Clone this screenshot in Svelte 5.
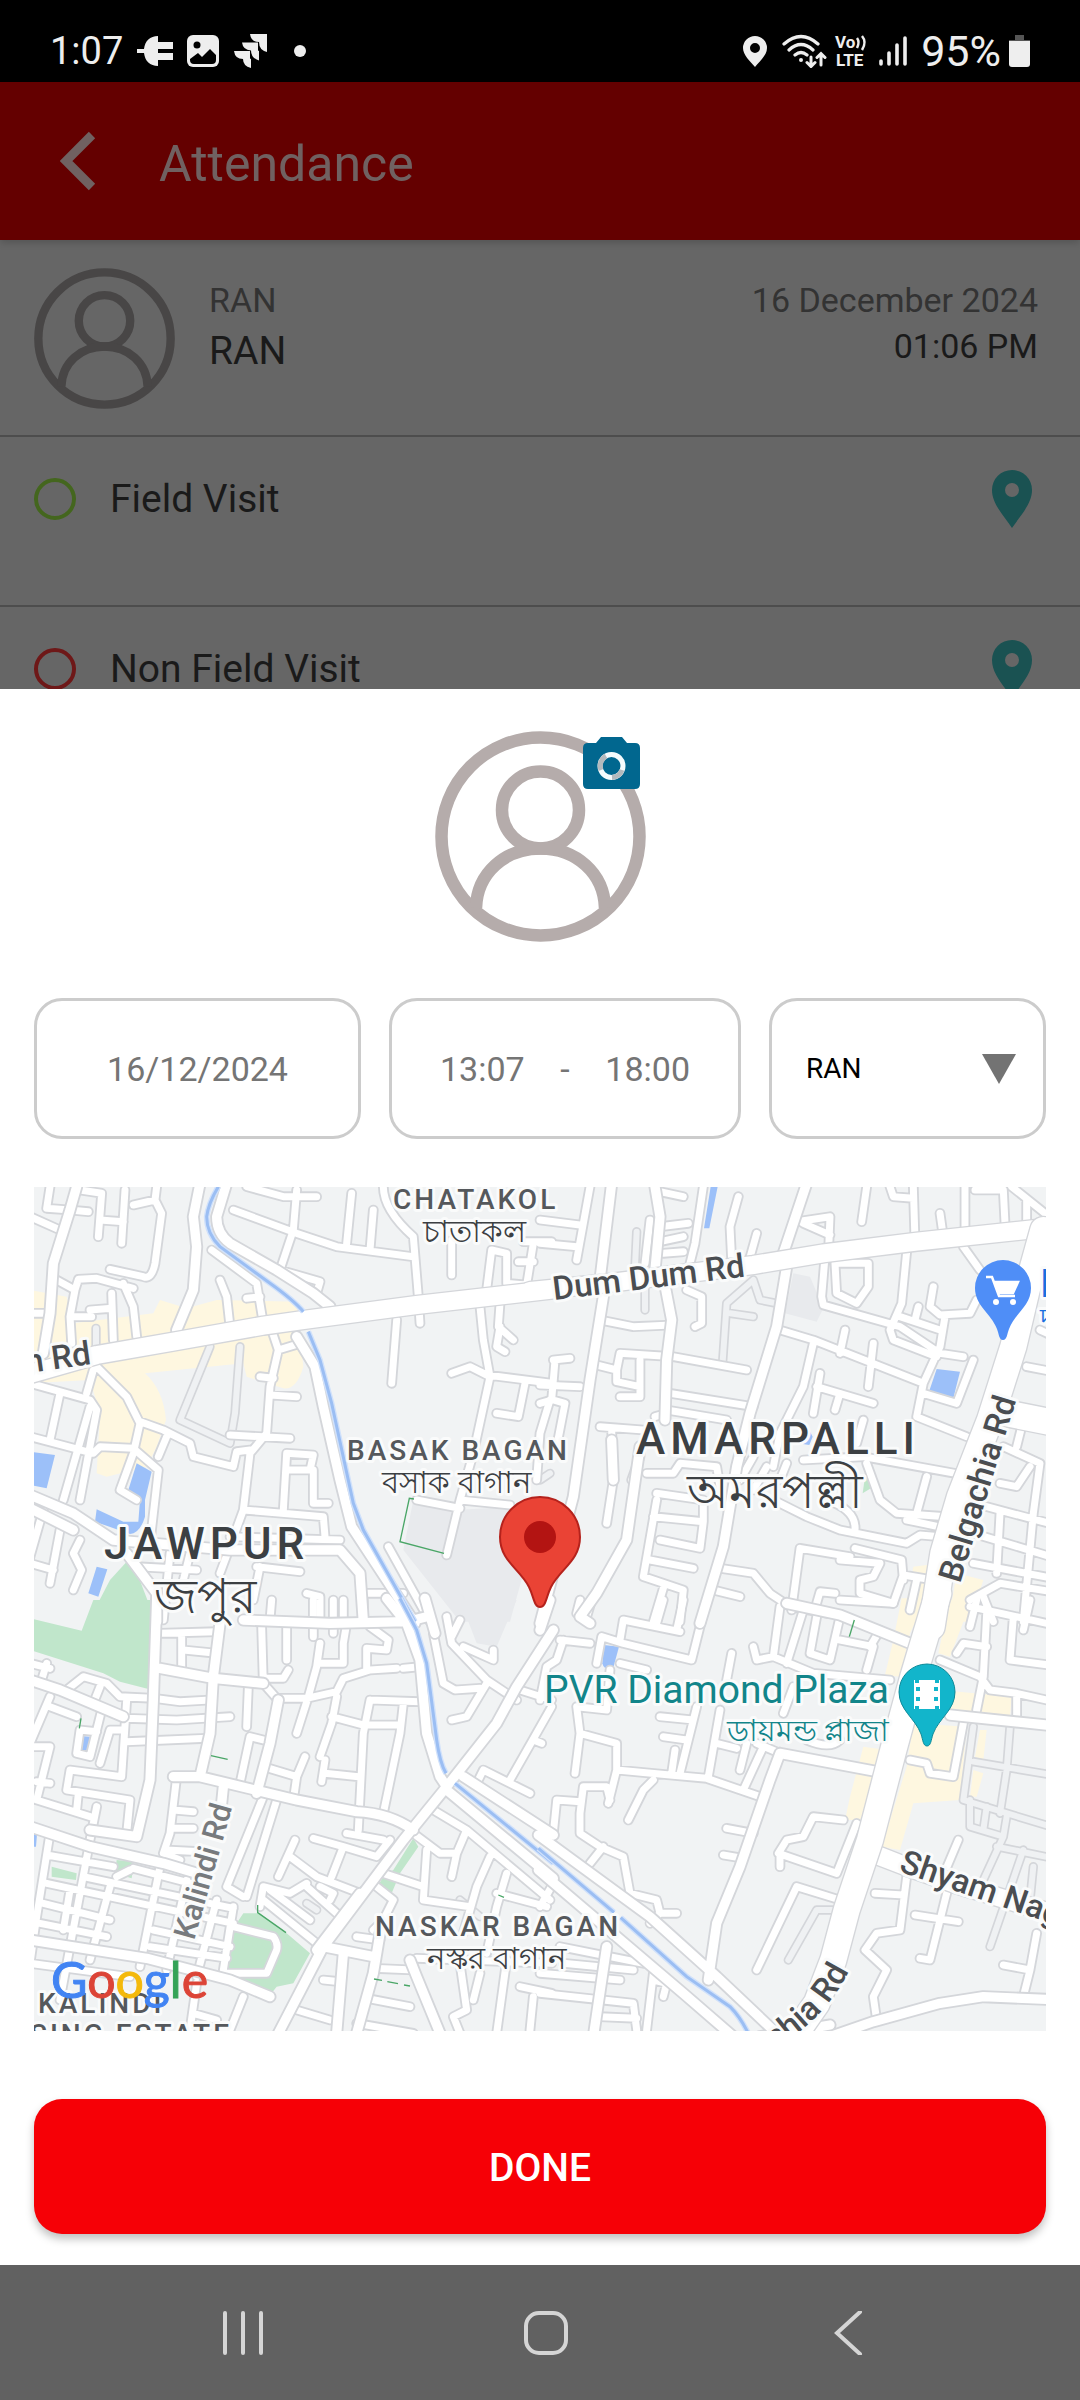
<script>
	let date = '16/12/2024'
	let from = '13:07'
	let to = '18:00'
	let place = 'RAN'

	const visits = [
		{ name: 'Field Visit', kind: 'green' },
		{ name: 'Non Field Visit', kind: 'red' }
	]

	// the map is four tiles, each drawn in its own units (3 units = 1 map pixel)
	const tiles = [
		{
			x: -4, y: -7,
			yellow: 'M0 330L110 350 130 430 370 400 390 360 470 385 560 360 800 365 820 560Q800 630 760 625L650 590 640 550 345 580Q400 630 408 720L380 800 350 860 230 890 200 880 210 700 180 600 0 610Z',
			blue: 'M0 815L75 825 50 925 0 915ZM320 850L365 875 345 960 345 1010Q330 1060 300 1062L195 1025 200 988 280 1025 325 1025 330 960 295 930ZM200 1160L232 1168 205 1250 175 1240Z',
			green: 'M290 1145L310 1150 360 1280 362 1325 175 1325 240 1200Z',
			grey: 'M1150 960L1280 990 1440 980 1480 1180 1440 1325 1290 1325 1120 1110Z',
			lines: 'M1152 957L1138 955 1110 1085 1242 1120',
			canal: 'M565 20Q535 70 530 110Q530 160 570 200L720 310Q790 360 820 395M835 455L870 540 905 670 970 970 1000 1050 1155 1325',
			lane: 'M540 500L450 720 600 790 615 700 630 500M198 445V500',
			minor: 'M0 110L90 150M60 20L50 85 120 90 175 95M150 30L215 40 205 170M210 120L280 125M285 30L275 190M380 20L375 60 310 75M375 60L395 100 375 250Q365 300 340 290L240 268M80 300L135 330 145 298 200 295 310 325M280 310L310 380 320 470M135 330L120 410 125 490M125 410H185M245 340L250 480M180 390L245 385M0 400H50M545 210L680 310 700 430M650 355L690 350M570 300L590 350 600 440M610 90L800 160 920 200 1150 230M800 30L790 150 750 270M650 20L760 50 860 50M965 40L950 190M1030 90L1020 210M1060 20Q1060 90 1150 170L1165 350 1170 430M750 270L870 305 860 340M1265 180V285M1370 330L1385 210 1430 220 1430 310 1490 315 1510 190M1465 245H1510M1480 185H1565M1100 420L1085 610M1350 380L1360 480 1380 590 1330 820 1290 960 1250 1125M1410 370L1405 440 1450 480M1410 440L1400 500 1425 515M1265 580L1320 560 1370 585 1565 610M1485 610L1465 710 1400 700M1560 660L1530 760 1520 900M1160 960L1290 985M1290 960L1440 975M725 450L745 510 720 620 710 760 660 820 640 990 600 1100 570 1180M745 510L810 490M690 590L730 595M720 645L800 650M600 765L780 775M200 560L290 650 330 730 310 820 270 930 320 960M330 725L400 750 480 790 490 830 610 860 620 815 660 810M410 770L385 830M0 610L180 660 200 690 150 960M190 570L170 640M180 680L100 960M90 640L60 780M0 770L190 820 210 800 310 805 385 870 360 1090M40 990L0 1130M60 1210L90 1050M150 1080L130 1120 155 1170 130 1230M640 990L880 1010 885 1070M770 820L850 825 840 870 770 870M770 820L760 990M850 870V970H895M600 1070L930 1080M680 1160L810 1175M690 1160L670 1260M320 1160L500 1170M420 1120L400 1320M480 1120L460 1200M1075 1100L1200 1325M1010 1240H1120M830 1240L870 1250 870 1325M940 1260V1325M0 1150L70 1170',
			road: 'M510 10L490 110 500 200 490 330 440 450M590 10L560 110Q560 160 600 190L740 270 850 340 900 380M140 20L120 90 70 250 60 400 40 520M800 470L855 560 880 680 930 900 965 1040 1070 1200 1155 1330M0 945L130 1000 250 1080 600 1110 930 1110 990 1180 1000 1325M290 1120L380 1240 380 1325M0 985L130 1050',
			main: 'M-10 585L200 525 430 485 700 437 820 420 1160 375 1600 325'
		},
		{
			x: 506, y: -7,
			yellow: 'M1120 1160L1200 1150 1180 1325 1085 1325 1110 1220ZM1250 1180L1330 1200 1290 1325 1225 1325Z',
			blue: 'M1190 567L1260 575 1240 655 1168 632ZM800 735L818 770 808 795 788 792ZM512 20H533L508 145H492Z',
			green: 'M975 890L1000 920 968 940Z',
			grey: 'M760 280L810 290 850 385 830 425 735 400Z',
			lines: '',
			canal: '',
			lane: 'M548 545L560 370 640 300M570 400L640 410M640 300L660 360 710 370M315 300V390M0 900L30 880M290 155L285 260',
			minor: 'M360 35L430 50M360 140L445 130M360 185L430 170M370 220L430 215M330 120L315 250M0 120L120 135M0 190L110 200M150 20L110 240M490 20L465 190 450 250M595 50L570 140 575 240M650 160L625 250M440 330L485 350 485 430 465 440M770 125L870 110 865 230M790 130L870 165M980 20L965 125M1050 20L1060 50 1120 55M1120 20L1125 180M1200 100L1210 170M1275 20V160M1305 30H1390L1395 130M1460 60V130M1415 20L1515 100M855 230L845 350 850 375 1080 440 1200 520 1270 530M885 250L890 340 950 370 985 320 985 250ZM1100 215L1085 370 1050 450 1060 480 1190 530M1270 200L1320 270M1180 320L1170 380 1200 405 1290 400 1310 360M1135 380L1125 420M1080 410L1200 450M1215 410L1200 500 1150 610 1130 710 1280 770M720 450L820 480 1150 610M915 450L900 520M1000 490L985 620M820 490L790 620 720 760 700 860M840 580L820 700M830 620L1000 670M900 640L885 690M1150 640L1250 670 1300 540M180 420L280 440 395 435M170 555L230 570 240 520 400 530 620 570M300 540V650H240M230 570V605L300 620M390 640L640 680M380 690L560 720M345 710L380 700M0 615L120 620M40 540L90 535M45 540L35 660 0 670M40 660L75 670 50 800M180 740L310 750M215 750L220 900 200 1030M300 830L275 900M320 880H400L420 850 530 860 540 920M350 940L490 960M350 960L310 1190 430 1230 420 1325M340 1010L490 1025 480 1105 360 1080M490 960V1025M330 1140L460 1165M370 1225L340 1325M790 840L970 830 1300 890M640 830L600 900M680 860L640 930M740 850L720 900M980 850L1020 960 1070 1000 1220 1010M1100 1020L1220 1045M1160 890L1130 1000M700 960L800 1010 900 1050 1100 1090 1140 1065 1200 1070M860 960Q950 990 945 1050M540 1165L640 1180 690 1240 750 1280 860 1300M520 1230L600 1250M755 1290L780 1105 930 1130M945 1105L1085 1140 1090 1200M900 1140L1020 1150 1000 1190 960 1200 960 1240 1060 1270 1090 1185 1180 1200M830 1270L840 1235 885 1240M1130 1200L1110 1290M970 720L950 790M1460 560L1565 580M1390 800L1500 850 1480 1000 1450 1325M1340 980L1565 1040M1300 1060L1400 1090 1565 1140M1300 1150L1565 1200M1380 1000L1370 1180M1470 860L1430 920 1380 910M1450 720L1430 800M1290 1260L1380 1210 1565 1240M1330 1250L1360 1325M1500 450L1565 480',
			road: 'M215 10L180 300M190 350L150 600 100 950 0 1330M800 10L730 220M740 260L710 440 630 700 590 860 550 1100 480 1330M345 20L360 110 345 270M370 290L395 420 380 540 375 720M300 800L260 1080 170 1240 120 1310 150 1330M215 780L220 900',
			main: 'M-30 333L200 310 640 255 850 220 1130 185 1600 135',
			wide: 'M1510 150L1460 330 1420 500 1350 720 1260 950 1210 1120 1175 1340M1400 700L1600 740'
		},
		{
			x: -4, y: 413,
			yellow: '',
			blue: 'M150 408L180 410 170 455 147 450ZM0 690H22L18 740H0Z',
			green: 'M0 55L155 92 190 0H362L358 268 270 245 220 220 0 150ZM640 940H690L770 1000 840 1060 790 1150 740 1160 720 1185 580 1150 600 1000ZM1150 715L1165 740 1110 820 1085 880 1045 855 1060 830 1090 810ZM260 780L312 785 305 835 255 820ZM65 800L140 820 138 840 65 830Z',
			grey: 'M1290 0H1460L1400 140 1340 130Z',
			lines: 'M153 355L148 385M543 467L593 478M683 915V938L768 998M1032 1137L1056 1141M1072 1145L1104 1151M1122 1155L1140 1158M1405 885L1422 892',
			canal: 'M1110 -5L1160 90 1190 190 1220 420Q1230 490 1248 520M1275 550L1570 790',
			lane: 'M1290 900L1350 950M830 910L860 930',
			minor: 'M390 100L560 95M455 110V210M460 150L560 160M695 80L700 250M770 80V180M775 210L760 235H710M725 0L720 60M850 80V110M910 0V100M850 0V60M1000 0V60M950 70L940 130M870 130L860 200 835 290 800 400M870 190H940V130M1020 80L1075 120 1070 150 1010 145V210M700 250L740 295H830L920 275 940 235 1020 210 1100 205M1120 205L1170 200M920 290L905 370 870 470M905 350L1000 375H1110M1020 300L1170 305M1120 310L1110 400 1060 640M1020 300L1000 400 985 690M370 295L450 305 540 300M290 355L440 360 600 350M290 425L530 415M655 260L650 380M720 425L660 410 630 550M700 500L800 530 790 600M825 470L800 530M885 480L875 545M885 520L985 530M440 530L420 700 400 760 450 780M430 630L490 635M430 685H490M410 750L510 755M740 600L650 890M700 590L590 860 640 890M50 190L35 240M0 190L60 205M110 270L160 230 230 250 270 290 370 295M210 260L190 310M60 290L0 430M60 320L140 350M215 330L180 470 140 460 150 390 200 395M210 490L240 390 280 390M290 300L275 530 120 510 110 570 300 600 290 700M0 440L60 440 20 600 180 650M20 545L60 550M200 620L180 720 90 1200M145 580L140 630M50 765L250 800M310 805L520 860M160 830L610 925M50 850L610 970M40 910L240 960M30 970L230 1010M370 990L600 1040M360 1040L590 1075M60 700L20 950 0 1090M240 860L180 1080M390 800L330 1100M470 840L410 1110M560 900L500 1130M610 920L580 1110M0 1090L300 1130M120 870L100 990M300 810L260 830M610 980L730 1010Q745 1030 740 1050L710 1120 590 1120M690 920L700 860 780 880 830 850M795 720L745 830M780 770L860 830 990 880M850 715L940 740 1040 770 1080 720M940 740L905 830M950 700L1060 720M700 900L860 1030M720 870L840 960M830 860L920 940M870 860L910 880 900 900M1210 630L1310 690 1560 900M1150 700L1230 760 1280 760 1265 830M1310 690L1280 760M1060 820L1180 860M1190 750L1180 900 1320 920M1380 770L1340 860 1300 1000M1430 820L1400 920 1370 1060M1400 880L1550 920M1040 860L1090 900 1060 960 1030 990M1470 270L1565 300M1510 420L1535 430M1565 320L1440 540M1340 550L1360 510 1500 580M1300 140L1390 180V150M1250 50L1265 130 1370 240 1460 300M1290 60L1265 110M1370 250L1310 350 1265 360M1210 100L1240 250 1275 270 1350 265M880 1140L930 1145M1010 1195L1140 1220M800 1230L900 1260M980 1270L1150 1300M980 1010L1050 1020M1290 1090L1310 1230 1270 1250 1290 1300M1430 1080L1400 1300M1470 1160L1565 1180M1510 1190L1500 1290M1160 1075L1565 1090M1030 1105L1150 1110M640 1190L600 1290M500 1150L480 1290M490 1240L560 1260M1350 1120L1330 1200',
			road: 'M1070 -5L1130 70 1170 180 1190 400 1230 530 1250 560M1185 -5L1215 100M1570 90L1460 260 1400 370 1250 560 1120 720 880 1040 740 1310M1250 570L1570 835M1300 530L1570 705M640 60L900 70 1130 65 1190 50M570 70L550 230 540 400 510 530M380 0L370 300 360 540 320 710 180 690M390 205L550 235 700 250M745 300L720 430 680 580M430 530H510L800 600 980 635Q1080 640 1150 690M580 560L570 660M0 240L90 270 280 350M0 680L180 740 400 790 500 820M0 1020L350 1075 600 1140 720 1190M990 880L860 1050M880 1040L1030 1070M1050 1000L1030 1120 980 1300M940 1060L920 1300M1140 1080L1160 1130 1230 1300'
		},
		{
			x: 506, y: 413,
			yellow: 'M1085 -5H1160L1110 100 1080 230 1035 225 1060 120ZM1230 -5L1280 40 1230 170 1195 160ZM970 440L1040 450 960 660 915 660 930 590ZM1120 370L1280 380 1260 600 1120 610 1080 750 1025 740 1100 500ZM1200 270L1415 290 1410 350 1200 340ZM1320 390H1340L1330 480 1305 470ZM1300 510L1330 520 1310 590 1290 590ZM1470 780L1480 840 1465 830Z',
			blue: 'M192 135L237 140 218 210Q190 210 187 190Z',
			green: '',
			grey: '',
			lines: 'M943 60L928 110',
			canal: 'M-5 745L222 937M242 953L440 1130 570 1220Q600 1250 625 1300',
			lane: 'M745 1080L830 930 880 930M1300 380L1270 600 1565 690M1300 485L1565 530M1410 380L1400 510 1380 640M1290 600V680L1390 710 1330 840M1370 740L1565 780M1450 750L1350 1040M1340 620L1330 690M1400 650L1390 710M1480 800L1470 900',
			minor: 'M500 0L455 180 250 130 185 110 170 190M60 120L150 130M70 120L50 180 20 200 0 300M155 0L140 50 110 40 120 0M240 120L250 60 420 95M370 0L350 70M430 0L410 90M240 190L320 210M210 210L200 330M110 320L120 400 230 430 230 510 205 610M110 320L200 330M120 400L105 520M230 510L390 525 500 535 660 590M360 350L460 360M470 320L420 520M370 410L440 420M405 450L395 520M540 330L505 530M670 440L610 570M530 430L590 445M600 510L620 430M650 430L720 460M800 420Q870 450 900 420M560 685L640 700M550 765L610 775M210 600L200 560 130 560 120 640 120 700 180 740 250 770 270 880 350 900 360 940 410 940M40 700L50 600 120 605M150 790L190 740M360 940L330 970M265 660L310 570 340 540M720 20L700 170 650 180 640 140M790 30L740 190M830 50L810 160 870 180 900 50M700 170L820 220 1050 240M900 120L1000 140 980 210M1020 90L990 140M575 160L560 240M760 260L730 340M910 660L820 650 790 710 740 720 715 760 890 820 950 670M720 760V800M650 1110L770 860 900 900M1200 180L1320 230 1350 270 1430 280 1565 310M1310 0L1290 80M1250 160L1270 130 1340 140M1340 40L1330 230 1310 330M1420 50L1410 180 1565 200M1470 0L1450 90M1430 290V350M1110 480L1160 490 1170 520 1240 530 1270 370M1255 720L1200 850M1220 880L1170 1080 1140 1075M1125 945L1255 965M1100 830L1080 990 1010 1000 975 1050 1040 1110 1000 1190 1010 1260M1005 880L1090 885M1390 1095L1470 1110 1450 1190M1490 1000L1470 1110M60 1040L310 1090M70 1090L280 1110M0 1120L240 1140M0 1180L280 1210 290 1290M340 1120L320 1290M340 1140L380 1150 370 1190M180 1250L290 1255M40 850L0 920M900 0L1060 10M1290 20L1565 80',
			road: 'M-5 705L330 950 530 1130 720 1310M-5 810L430 1180 580 1310M740 10L900 45 1110 130M720 460L1040 520M720 460L690 540 600 800 530 970 505 1140M200 1040L160 1310M870 1310L1000 1265 1200 1210 1330 1190 1565 1200M1230 345L1565 380M30 0L0 90M660 1310L870 1275',
			main: 'M1010 765L1100 800 1240 850 1600 960',
			wide: 'M1195 -20L1120 230 1060 450 990 720 920 930 880 1080 830 1210 760 1310'
		}
	]
	const widths = { lane: [28, 18], minor: [32, 21], road: [39, 28], main: [62, 54], wide: [86, 78] }
	const kinds = ['lane', 'minor', 'road', 'main', 'wide']
</script>

{#snippet avatar()}
	<svg class="avatar" viewBox="0 0 211 211" aria-hidden="true">
		<g fill="none" stroke="currentColor" stroke-width="12.5">
			<circle cx="105.5" cy="105.5" r="99" />
			<circle cx="105.5" cy="79" r="38.5" />
			<path d="M41 177C42 142 70 117.500 105.500 117.500S169 142 170 177" />
		</g>
	</svg>
{/snippet}

<main class="screen">
	<header class="status">
		<div class="side">
			<span class="clock">1:07</span>
			<svg class="plug" width="36" height="32" viewBox="0 0 36 32"><path d="M0 14H7C8 6 13 1 21 1V7H36V14H21V18H36V25H21V31C13 31 8 26 7 18H0Z" fill="#eee" /></svg>
			<svg class="photo" width="32" height="32" viewBox="0 0 32 32"><rect width="32" height="32" rx="6" fill="#eee" /><circle cx="10" cy="10" r="3.500" /><path d="M3 24L11 18 15 22 23 14 29 20V25Q29 29 25 29H7Q3 29 3 25Z" /></svg>
			<svg class="jira" width="34" height="34" viewBox="0 0 34 34" fill="#eee"><path d="M16 0H33V18Q25 16 25 8Q17 8 16 0Z" /><path d="M8 8.500H24V16Q24 17 25 17V26.500Q17 24 17 16.500Q9 16 8 8.500Z" /><path d="M0 17H16V24Q16 25 17 25V34Q9 32 9 25Q1 25 0 17Z" /></svg>
			<span class="dot"></span>
		</div>
		<div class="side">
			<svg width="24" height="31" viewBox="0 0 24 31"><path d="M12 0A12 12 0 0 0 0 12C0 19 7 25 12 31C17 25 24 19 24 12A12 12 0 0 0 12 0ZM12 7A5 5 0 1 1 12 17A5 5 0 1 1 12 7Z" fill="#eee" fill-rule="evenodd" /></svg>
			<svg class="wifi" width="45" height="34" viewBox="0 0 45 34" fill="none" stroke="#eee" stroke-width="3.200" stroke-linecap="round"><path d="M2 10Q19-5 36 10M7 16Q19 5 31 16M13 21Q19 16 25 21" /><circle cx="19" cy="26" r="1" fill="#eee" stroke-width="2" /><path d="M29 23V32M25 28.500L29 32.500 33 28.500M39 31V20M35 23.500L39 19.500 43 23.500" stroke-width="3" /></svg>
			<svg class="volte" width="32" height="34" viewBox="0 0 32 34"><text x="0" y="14">Vo</text><text x="1" y="32">LTE</text><path d="M22 4Q25 8 22 14M27 2Q32 8 27 16" fill="none" stroke="#eee" stroke-width="2.500" /></svg>
			<svg class="bars" width="28" height="31" viewBox="0 0 28 31" stroke="#eee" stroke-width="3.600" stroke-linecap="round"><path d="M2 25V28M10 17V28M18 9V28M26 2V28" /></svg>
			<span class="clock level">95%</span>
			<svg class="battery" width="21" height="32" viewBox="0 0 21 32"><path d="M6 0H15V5H21V9H0V5H6Z" fill="#555" /><path d="M0 6H21V29Q21 32 18 32H3Q0 32 0 29Z" fill="#eee" /></svg>
		</div>
	</header>

	<section class="behind">
		<div class="toolbar">
			<button class="back" aria-label="Back">
				<svg width="36" height="60" viewBox="0 0 36 60"><path d="M32 4L6 30 32 56" fill="none" stroke="currentColor" stroke-width="9" /></svg>
			</button>
			<h1>Attendance</h1>
		</div>
		<div class="user">
			{@render avatar()}
			<div class="who">
				<span class="small">RAN</span>
				<span class="big">RAN</span>
			</div>
			<div class="when">
				<span class="small">16 December 2024</span>
				<span class="time">01:06 PM</span>
			</div>
		</div>
		{#each visits as visit}
			<div class="visit">
				<span class="ring {visit.kind}"></span>
				<span class="label">{visit.name}</span>
				<svg width="40" height="58" viewBox="0 0 40 58"><path d="M20 0A20 20 0 0 0 0 20C0 34 12 46 20 58C28 46 40 34 40 20A20 20 0 0 0 20 0ZM20 13A7 7 0 1 1 20 27A7 7 0 1 1 20 13Z" fill="#1a5252" fill-rule="evenodd" /></svg>
			</div>
		{/each}
	</section>

	<section class="sheet">
		<div class="photo-box">
			{@render avatar()}
			<button class="camera" aria-label="Take photo">
				<svg width="57" height="52" viewBox="0 0 57 52"><path d="M5 6H13L18 0H39L44 6H52Q57 6 57 11V47Q57 52 52 52H5Q0 52 0 47V11Q0 6 5 6Z" fill="#01678f" /><circle cx="28.500" cy="29" r="11.500" fill="none" stroke="#f4fbfd" stroke-width="5" /><path d="M18 33A11.500 11.500 0 0 1 23 19M39 33A11.500 11.500 0 0 1 29 40.500" fill="none" stroke="#b3b9bd" stroke-width="5" /></svg>
			</button>
		</div>

		<div class="fields">
			<input class="box" type="text" aria-label="Date" bind:value={date} />
			<div class="box times">
				<input type="text" aria-label="From" bind:value={from} />
				<span>-</span>
				<input type="text" aria-label="To" bind:value={to} />
			</div>
			<div class="box pick">
				<select aria-label="Place" bind:value={place}>
					<option>RAN</option>
				</select>
				<svg width="34" height="30" viewBox="0 0 34 30" aria-hidden="true"><path d="M0 0H34L17 30Z" fill="#737373" /></svg>
			</div>
		</div>

		<svg class="map" viewBox="0 0 1012 844" role="img" aria-label="Map">
			<rect width="1012" height="844" fill="#f1f3f4" />
			{#each tiles as t}
				<g transform="translate({t.x} {t.y}) scale(.33333)">
					<path d={t.grey} fill="#e8eaed" />
					<path d={t.yellow} fill="#fef7e0" />
					<path d={t.green} fill="#c0e6cb" />
					<path d={t.blue} fill="#9cc0f9" />
				</g>
			{/each}
			{#each kinds as kind, k}
				{#each [0, 1] as layer}
					{#each tiles as t}
						{#if t[kind]}
							<path
								d={t[kind]}
								transform="translate({t.x} {t.y}) scale(.33333)"
								class="way"
								stroke={layer == 0 ? '#d4d6da' : k == 0 ? '#eff1f3' : '#fff'}
								stroke-width={widths[kind][layer]}
							/>
						{/if}
					{/each}
				{/each}
			{/each}
			{#each tiles as t}
				<g transform="translate({t.x} {t.y}) scale(.33333)" fill="none">
					<path d={t.canal} stroke="#d0e1fb" stroke-width="17" />
					<path d={t.canal} stroke="#9bbef3" stroke-width="9" />
					<path d={t.lines} stroke="#4aa667" stroke-width="4" />
				</g>
			{/each}

			<g class="names">
				<g class="place">
					<text x="359" y="22">CHATAKOL</text>
					<text x="313" y="273">BASAK BAGAN</text>
					<text x="341" y="749">NASKAR BAGAN</text>
					<text x="4" y="826">KALINDI</text>
					<text x="198" y="857" text-anchor="end">HOUSING ESTATE</text>
				</g>
				<g class="town">
					<text x="602" y="267">AMARPALLI</text>
					<text x="70" y="372">JAWPUR</text>
				</g>
				<g class="bn">
					<text x="440" y="55">চাতাকল</text>
					<text x="423" y="306">বসাক বাগান</text>
					<text x="463" y="782">নস্কর বাগান</text>
				</g>
				<g class="bn large">
					<text x="741" y="321">অমরপল্লী</text>
					<text x="171" y="426">জপুর</text>
				</g>
				<g class="street">
					<text transform="translate(520 113) rotate(-7)">Dum Dum Rd</text>
					<text transform="translate(58 177) rotate(-8)" text-anchor="end">n Rd</text>
					<text transform="translate(926 397) rotate(-73)">Belgachia Rd</text>
					<text transform="translate(864 684) rotate(19)">Shyam Nagar Rd</text>
					<path id="bend" d="M702 884Q785 845 815 784" fill="none" />
					<text><textPath href="#bend" startOffset="100%" text-anchor="end">chia Rd</textPath></text>
				</g>
				<text class="lesser" transform="translate(160 754) rotate(-74)">Kalindi Rd</text>
				<text class="poi" x="855" y="516" text-anchor="end">PVR Diamond Plaza</text>
				<text class="poi bn-poi" x="855" y="554" text-anchor="end">ডায়মন্ড প্লাজা</text>
				<text class="poi shop" x="1006" y="110">D</text>
				<text class="poi shop bn-poi" x="1006" y="142">দ</text>
			</g>

			<g transform="translate(969 101)">
				<path d="M0 52C-4 52-4 46-6 41C-12 25-28 18-28 0A28 28 0 0 1 28 0C28 18 12 25 6 41C4 46 4 52 0 52Z" fill="#4f8ef7" />
				<path d="M-17-11H-11L-4 8H12M-9-6H15L10 5H-5Z" fill="none" stroke="#fff" stroke-width="2.500" />
				<path d="M-9-7H15L10 5H-5Z" fill="#fff" /><circle cx="-7" cy="14" r="3" fill="#fff" /><circle cx="10" cy="14" r="3" fill="#fff" />
			</g>
			<g transform="translate(893 505)">
				<path d="M0 54C-4 54-4 48-6 42C-12 26-28 18-28 0A28 28 0 0 1 28 0C28 18 12 26 6 42C4 48 4 54 0 54Z" fill="#12b5cb" stroke="#0d8a99" stroke-width="1" />
				<path d="M-13-12H13V17H-13Z" fill="#fff" />
				<path d="M-9-5V-1M-9 5V9M9-5V-1M9 5V9M-10-12V-9M10-12V-9M-10 14V17M10 14V17" stroke="#12b5cb" stroke-width="4" />
			</g>
			<g transform="translate(506 350)">
				<path d="M0 70C-6 70-6 60-11 50C-20 32-40 24-40 0A40 40 0 0 1 40 0C40 24 20 32 11 50C6 60 6 70 0 70Z" fill="#ea4335" stroke="#b5221c" stroke-width="2" />
				<circle r="16" fill="#b31412" />
			</g>

			<text class="google" x="17" y="811"><tspan class="g-blue">G</tspan><tspan class="g-red">o</tspan><tspan class="g-yellow">o</tspan><tspan class="g-blue">g</tspan><tspan class="g-green">l</tspan><tspan class="g-red">e</tspan></text>
		</svg>

		<button class="done">DONE</button>
	</section>

	<nav>
		<button aria-label="Recents"><svg width="44" height="44" viewBox="0 0 44 44"><path d="M4 2V42M22 2V42M40 2V42" /></svg></button>
		<button aria-label="Home"><svg width="44" height="44" viewBox="0 0 44 44"><rect x="2" y="2" width="40" height="40" rx="13" /></svg></button>
		<button aria-label="Back"><svg width="44" height="44" viewBox="0 0 44 44"><path d="M34 1L11 22 34 43" /></svg></button>
	</nav>
</main>

<style>
:global(body){
    margin: 0;
    background-color: #666;
}

.screen{
    min-height: 100vh;
    display: flex;
    flex-direction: column;
    font-family: Roboto, sans-serif;
}

button{
    border: none;
    background: none;
    padding: 0;
    font-family: inherit;
}

svg{
    display: block;
    flex: none;
}

/* status bar */
.status{
    height: 82px;
    padding: 20px 50px 0 50px;
    box-sizing: border-box;
    background-color: black;
    display: flex;
    justify-content: space-between;
}
.side{
    display: flex;
    align-items: center;
    height: 62px;
}
.clock{
    color: #eee;
    font-size: 38px;
    line-height: 62px;
}
.clock.level{
    font-size: 43px;
}
.plug, .photo, .battery{
    margin-left: 14px;
}
.battery{
    margin-left: 8px;
}
.jira, .wifi{
    margin-left: 15px;
}
.dot{
    width: 12px;
    height: 12px;
    margin-left: 26px;
    border-radius: 50%;
    background-color: #eee;
}
.volte{
    margin-left: 8px;
    overflow: visible;
}
.volte text{
    fill: #eee;
    font-size: 17px;
    font-weight: 700;
}
.bars{
    margin: 0 14px 0 12px;
}

/* dimmed page behind the sheet */
.behind{
    flex: 1 1 0;
    min-height: 0;
    overflow: hidden;
    background-color: #666;
    color: #1a1a1a;
}
.toolbar{
    height: 158px;
    padding-left: 60px;
    display: flex;
    align-items: center;
    gap: 63px;
    background-color: #640000;
    color: #706161;
    box-shadow: 0 2px 8px rgba(0, 0, 0, 0.2);
}
.back{
    color: inherit;
}
.toolbar h1{
    margin: 6px 0 0 0;
    font-size: 50px;
    line-height: 62px;
    font-weight: 400;
}
.user{
    display: flex;
    height: 197px;
    box-sizing: border-box;
    padding: 28px 42px 0 34px;
    border-bottom: 2px solid #4d4d4d;
    color: #484646;
}
.user .avatar{
    width: 141px;
    height: 141px;
}
.who, .when{
    display: flex;
    flex-direction: column;
    padding-top: 12px;
}
.who{
    margin-left: 34px;
    gap: 7px;
}
.when{
    margin-left: auto;
    align-items: flex-end;
    gap: 6px;
}
.small, .time{
    font-size: 34px;
    line-height: 40px;
    color: #333;
}
.big{
    font-size: 39px;
    line-height: 48px;
}
.big, .time{
    color: #1a1a1a;
}
.visit{
    display: flex;
    align-items: center;
    height: 170px;
    box-sizing: border-box;
    padding: 0 48px 44px 34px;
    border-bottom: 2px solid #4d4d4d;
}
.ring{
    width: 42px;
    height: 42px;
    box-sizing: border-box;
    border: 4px solid #44661e;
    border-radius: 50%;
}
.ring.red{
    border-color: #6e1818;
}
.label{
    flex: 1;
    margin-left: 34px;
    font-size: 39px;
    line-height: 48px;
}

/* bottom sheet */
.sheet{
    position: relative;
    display: flex;
    flex-direction: column;
    padding: 42px 34px 31px 34px;
    background-color: white;
}
.photo-box{
    position: relative;
    align-self: center;
    color: #b5acab;
}
.photo-box .avatar{
    width: 211px;
    height: 211px;
}
.camera{
    position: absolute;
    top: 6px;
    right: 6px;
}
.fields{
    display: grid;
    grid-template-columns: 327fr 352fr 277fr;
    gap: 28px;
    margin-top: 56px;
}
.box{
    width: 100%;
    min-width: 0;
    height: 141px;
    box-sizing: border-box;
    border: 3px solid #ccc;
    border-radius: 28px;
    background-color: white;
}
input{
    font-family: inherit;
    font-size: 34px;
    color: #757575;
    text-align: center;
    padding: 0;
}
.times{
    display: flex;
    align-items: center;
    justify-content: center;
    gap: 35px;
    font-size: 34px;
    color: #757575;
}
.times input{
    width: 86px;
    border: none;
}
.pick{
    display: flex;
    align-items: center;
    padding: 0 27px 0 34px;
}
select{
    flex: 1;
    min-width: 0;
    height: 100%;
    appearance: none;
    border: none;
    background: none;
    padding: 0;
    font-family: inherit;
    font-size: 28px;
    color: black;
}
.done{
    height: 135px;
    margin-top: 68px;
    padding-top: 2px;
    border-radius: 28px;
    background-color: #f60006;
    color: white;
    font-size: 39px;
    font-weight: 500;
    box-shadow: 0 5px 8px rgba(0, 0, 0, 0.25);
}

/* map */
.map{
    width: 100%;
    height: auto;
    margin-top: 48px;
    overflow: hidden;
}
.way{
    fill: none;
    stroke-linecap: round;
    stroke-linejoin: round;
}
.names text{
    fill: #3c4043;
    stroke: #fafbfb;
    stroke-width: 6px;
    stroke-linejoin: round;
    paint-order: stroke;
    font-weight: 500;
}
.place text{
    font-size: 28px;
    letter-spacing: 3px;
    fill: #55585c;
}
.town text{
    font-size: 44px;
    letter-spacing: 5px;
}
.bn text{
    font-size: 31px;
    text-anchor: middle;
}
.bn.large text{
    font-size: 48px;
}
.street text{
    font-size: 33px;
    fill: #4a4d51;
}
.names .lesser{
    font-size: 31px;
    fill: #777a7d;
}
.names .poi{
    font-size: 39px;
    font-weight: 400;
    fill: #12858a;
}
.names .bn-poi{
    font-size: 30px;
    font-weight: 500;
}
.names .shop{
    fill: #1a6fe0;
}
.google{
    font-family: Lato, sans-serif;
    font-size: 50px;
    stroke-width: 1px;
}
.g-blue{
    fill: #4284f3;
    stroke: #4284f3;
}
.g-red{
    fill: #dc4437;
    stroke: #dc4437;
}
.g-yellow{
    fill: #f4b90b;
    stroke: #f4b90b;
}
.g-green{
    fill: #34a357;
    stroke: #34a357;
}

/* system navigation */
nav{
    height: 135px;
    display: flex;
    align-items: center;
    justify-content: space-between;
    padding: 0 210px 0 221px;
    background-color: #616161;
}
nav svg{
    fill: none;
    stroke: #d5d5d5;
    stroke-width: 4;
    stroke-linecap: round;
}
</style>
